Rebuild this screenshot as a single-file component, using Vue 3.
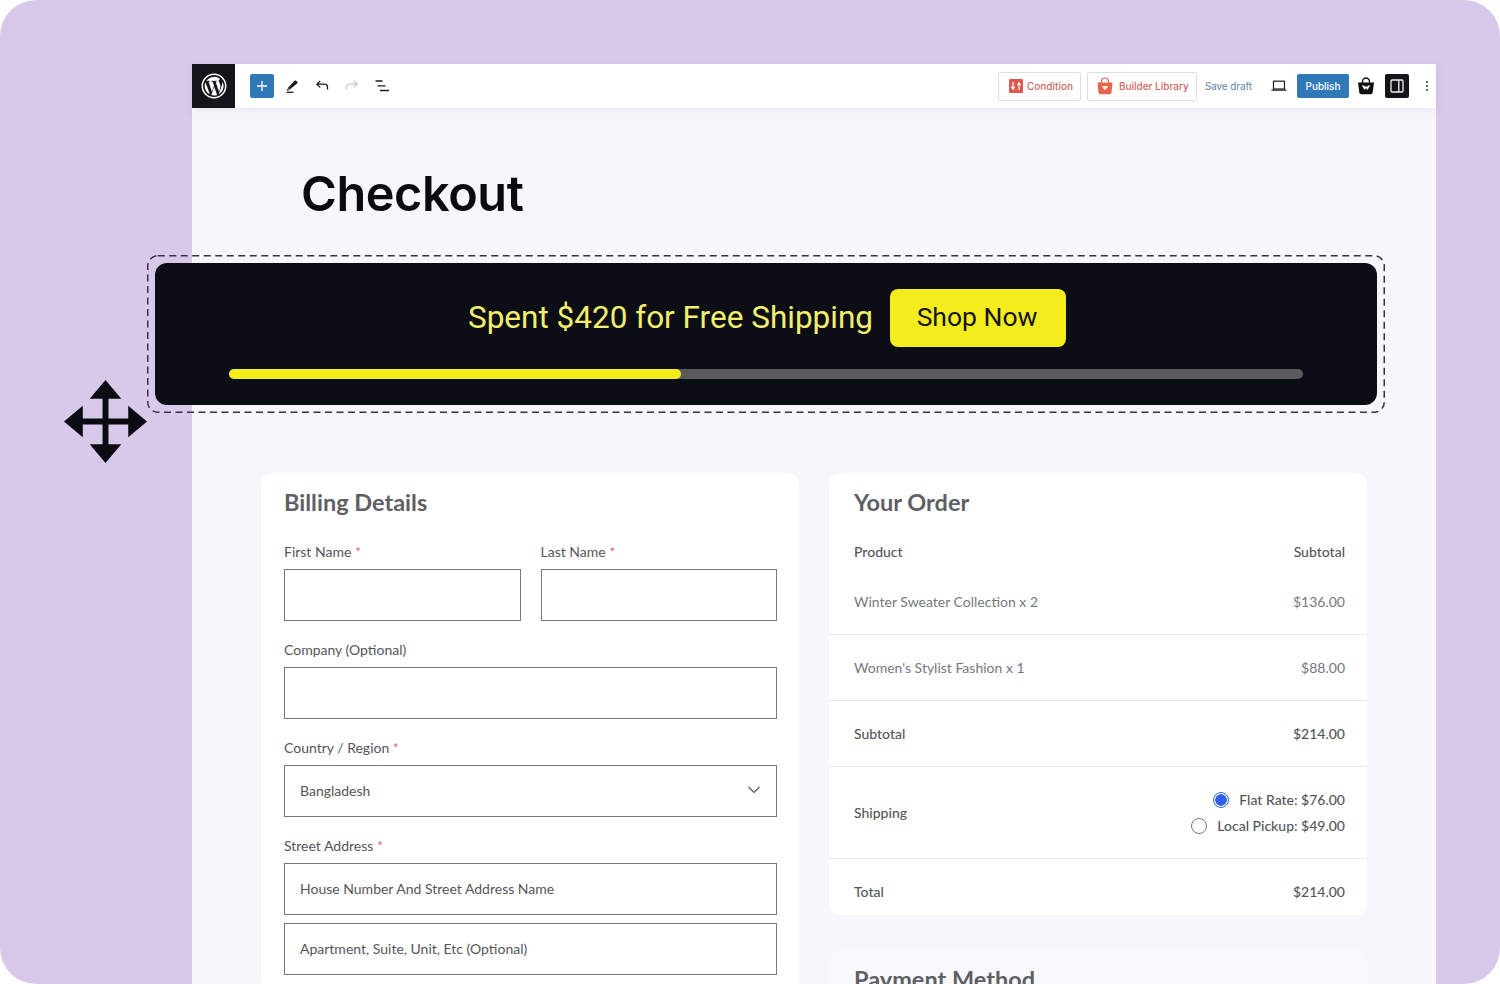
<script setup>
const rows = [
  { name: "Winter Sweater Collection x 2", price: "$136.00" },
  { name: "Women's Stylist Fashion x 1", price: "$88.00" },
];
</script>

<template>
  <main class="page">
    <section class="editor">
      <header class="topbar">
        <div class="wp-logo">
          <svg viewBox="0 0 24 24" width="26" height="26">
            <circle cx="12" cy="12" r="10.800" fill="none" stroke="#fff" stroke-width="1.400" />
            <path fill="#fff" d="M3.400 12c0 3.400 2 6.300 4.800 7.700L4.100 8.600C3.700 9.600 3.400 10.800 3.400 12zM17.800 11.600c0-1.100-.4-1.800-.7-2.400-.4-.7-.8-1.300-.8-2 0-.8.600-1.500 1.400-1.500h.1A8.600 8.600 0 0 0 5 7.300h.6c.9 0 2.300-.1 2.300-.1.500 0 .5.700.1.700 0 0-.5.100-1 .1l3.100 9.300 1.900-5.700-1.300-3.600c-.5 0-.9-.1-.9-.1-.5 0-.4-.7 0-.7 0 0 1.400.1 2.300.1.900 0 2.300-.1 2.300-.1.500 0 .5.700.1.700 0 0-.5.100-1 .1l3.100 9.200.9-2.900c.2-.8.300-1.300.3-2.100zM12.200 12.800l-2.600 7.500a8.600 8.600 0 0 0 5.300-.1l-.1-.1zM19.600 7.900c0 .3.100.6.100 1 0 .9-.2 1.900-.7 3.200l-2.600 7.600a8.600 8.600 0 0 0 3.200-11.800z" />
          </svg>
        </div>
        <div class="tools-left">
          <button class="add-btn">
            <svg viewBox="0 0 14 14" width="14" height="14"><path d="M7 2v10M2 7h10" stroke="#fff" stroke-width="1.300" /></svg>
          </button>
          <svg class="tool" viewBox="0 0 16 16" width="16" height="16">
            <path d="M5.500 11.800 3.800 10.100l6.700-7.300c.6-.6 1.400-.5 2 .1l.6.6c.6.6.6 1.400 0 2z" fill="#1e1e1e" />
            <path d="M3.500 10.500 2.800 12.800l2.500-.6z" fill="#1e1e1e" />
            <path d="M2.500 14.300h7" stroke="#1e1e1e" stroke-width="1.300" />
          </svg>
          <svg class="tool" viewBox="0 0 16 16" width="16" height="16" fill="none" stroke="#1e1e1e" stroke-width="1.300">
            <path d="M6.200 3 2.800 6.200l3.400 3.200M3 6.200h7.500a3 3 0 0 1 3 3v2.300" />
          </svg>
          <svg class="tool" viewBox="0 0 16 16" width="16" height="16" fill="none" stroke="#c9c9c9" stroke-width="1.300">
            <path d="M9.800 3l3.400 3.200-3.400 3.200M13 6.200H5.500a3 3 0 0 0-3 3v2.300" />
          </svg>
          <svg class="tool" viewBox="0 0 16 16" width="16" height="16" stroke="#1e1e1e" stroke-width="1.300">
            <path d="M1.500 3h7M3.500 7.800h8M6 12.500h9" />
          </svg>
        </div>
        <div class="tools-right">
          <a class="ext-btn cond">
            <svg viewBox="0 0 14 14" width="14" height="14">
              <rect width="14" height="14" rx="1" fill="#dd5a52" />
              <path d="M4 3v7M2.300 7.800 4 10.200l1.700-2.400M10 11V4M8.300 6.200 10 3.800l1.700 2.400" stroke="#fff" stroke-width="1.100" fill="none" />
            </svg>
            Condition
          </a>
          <a class="ext-btn lib">
            <svg viewBox="0 0 18 18" width="18" height="18">
              <path d="M5.500 6V4.500a3.500 3.500 0 0 1 7 0V6" fill="none" stroke="#e8644f" stroke-width="1.200" />
              <path d="M1.500 5.500h15l-1 10a2 2 0 0 1-2 1.800h-9a2 2 0 0 1-2-1.800z" fill="#e8644f" />
              <path d="M5.500 9h7L9 13.500z" fill="#fde9d8" />
            </svg>
            Builder Library
          </a>
          <span class="save">Save draft</span>
          <svg class="device" viewBox="0 0 16 12" width="16" height="12" fill="none" stroke="#1e1e1e" stroke-width="1.200">
            <rect x="2.500" y="1.200" width="11" height="7.800" />
            <path d="M.5 10.200h15" />
          </svg>
          <button class="publish">Publish</button>
          <svg class="basket" viewBox="0 0 18 18" width="18" height="18">
            <path d="M5.500 6V4.500a3.500 3.500 0 0 1 7 0V6" fill="none" stroke="#111" stroke-width="1.300" />
            <path d="M1 5.500h16l-1.300 10a2 2 0 0 1-2 1.800H4.300a2 2 0 0 1-2-1.800z" fill="#111" />
            <path d="M4.800 8.500h2.400L8 10.200 9 8.500l1 1.700.8-1.700h2.400L10.400 13 9 11 7.600 13z" fill="#fff" />
          </svg>
          <button class="panel-btn">
            <svg viewBox="0 0 14 14" width="14" height="14" fill="none" stroke="#f2f2f2" stroke-width="1.300">
              <rect x="1" y="1" width="12" height="12" rx="1" />
              <path d="M8.800 1v12" />
            </svg>
          </button>
          <span class="dots"><i></i><i></i><i></i></span>
        </div>
      </header>

      <h1 class="title">Checkout</h1>

      <div class="banner-outline">
        <svg class="dash" width="1238" height="158">
          <rect x="0.750" y="0.750" width="1236.500" height="156.500" rx="10" fill="none" stroke="#37304c" stroke-width="1.500" stroke-dasharray="7 4.500" />
        </svg>
        <div class="banner">
          <div class="banner-line">
            <span class="banner-text">Spent $420 for Free Shipping</span>
            <button class="shop-btn">Shop Now</button>
          </div>
          <div class="progress"><div class="progress-fill" :style="{ width: '42.1%' }"></div></div>
        </div>
      </div>

      <div class="columns">
        <section class="card billing">
          <h2>Billing Details</h2>
          <div class="two">
            <div class="field">
              <label>First Name <em>*</em></label>
              <div class="input"></div>
            </div>
            <div class="field">
              <label>Last Name <em>*</em></label>
              <div class="input"></div>
            </div>
          </div>
          <div class="field">
            <label>Company (Optional)</label>
            <div class="input"></div>
          </div>
          <div class="field">
            <label>Country / Region <em>*</em></label>
            <div class="input select">
              Bangladesh
              <svg viewBox="0 0 14 8" width="14" height="8" fill="none" stroke="#555" stroke-width="1.100"><path d="M1.500 1 7 6.500 12.500 1" /></svg>
            </div>
          </div>
          <div class="field tight">
            <label>Street Address <em>*</em></label>
            <div class="input">House Number And Street Address Name</div>
          </div>
          <div class="input">Apartment, Suite, Unit, Etc (Optional)</div>
        </section>

        <div class="right-col">
          <section class="card order">
            <h2>Your Order</h2>
            <div class="row row-head"><span>Product</span><span>Subtotal</span></div>
            <div v-for="r in rows" :key="r.name" class="row row-item">
              <span>{{ r.name }}</span><span>{{ r.price }}</span>
            </div>
            <div class="row row-sub"><span>Subtotal</span><span>$214.00</span></div>
            <div class="row row-ship">
              <span>Shipping</span>
              <div class="ship-opts">
                <div class="opt"><span class="radio on"></span>Flat Rate: $76.00</div>
                <div class="opt"><span class="radio"></span>Local Pickup: $49.00</div>
              </div>
            </div>
            <div class="row row-total"><span>Total</span><span>$214.00</span></div>
          </section>
          <section class="card payment">
            <h2>Payment Method</h2>
          </section>
        </div>
      </div>
    </section>

    <svg class="move-icon" viewBox="0 0 84 84" width="83" height="83">
      <path fill="#0b0b12" d="M42 0 58 19H45V39H65V26L84 42 65 58V45H45V65H58L42 84 26 65H39V45H19V58L0 42 19 26V39H39V19H26z" />
    </svg>
  </main>
</template>

<style>
html,
body {
  margin: 0;
  background: #fff;
}
</style>

<style scoped>
.page {
  position: relative;
  box-sizing: border-box;
  width: 1500px;
  height: 984px;
  padding: 64px 64px 0 192px;
  overflow: hidden;
  background: #d8c9ea;
  border-radius: 36px;
  font-family: Lato, "Liberation Sans", sans-serif;
}

.editor {
  height: 920px;
  background: #f8f6fd;
}

.topbar {
  display: flex;
  align-items: center;
  height: 44px;
  background: #fff;
  box-shadow: 0 3px 10px rgba(60, 50, 90, 0.08);
}

.wp-logo {
  display: flex;
  align-items: center;
  justify-content: center;
  width: 43px;
  height: 44px;
  background: #17151c;
}

.tools-left {
  display: flex;
  align-items: center;
  gap: 14px;
  margin-left: 15px;
}

.add-btn {
  display: flex;
  align-items: center;
  justify-content: center;
  width: 24px;
  height: 24px;
  margin-right: -4px;
  padding: 0;
  border: none;
  border-radius: 2px;
  background: #2f79b9;
}

.tools-right {
  display: flex;
  align-items: center;
  margin-left: auto;
  padding-right: 8px;
}

.ext-btn {
  display: flex;
  align-items: center;
  box-sizing: border-box;
  height: 29px;
  border: 1px solid #e2dddd;
  border-radius: 2px;
  color: #d2685f;
  font-family: Inter, sans-serif;
  font-size: 10px;
  font-weight: 500;
}

.cond {
  width: 83px;
  gap: 4px;
  padding-left: 10px;
}

.lib {
  width: 110px;
  gap: 5px;
  margin-left: 6px;
  padding-left: 8px;
}

.save {
  margin-left: 8px;
  color: #5d86a0;
  font-family: Inter, sans-serif;
  font-size: 9.800px;
}

.device {
  margin-left: 19px;
}

.publish {
  width: 52px;
  height: 24px;
  margin-left: 10px;
  padding: 0;
  border: none;
  border-radius: 2px;
  background: #2f79b9;
  color: #fff;
  font-family: Inter, sans-serif;
  font-size: 10px;
  font-weight: 500;
}

.basket {
  margin-left: 8px;
}

.panel-btn {
  display: flex;
  align-items: center;
  justify-content: center;
  width: 24px;
  height: 24px;
  margin-left: 10px;
  padding: 0;
  border: none;
  border-radius: 2px;
  background: #17151c;
}

.dots {
  display: flex;
  flex-direction: column;
  gap: 2px;
  margin-left: 17px;
}

.dots i {
  width: 2px;
  height: 2px;
  border-radius: 50%;
  background: #333;
}

.title {
  margin: 0;
  padding: 57px 0 0 109px;
  color: #0a0a10;
  font-family: Inter, sans-serif;
  font-size: 48.600px;
  font-weight: 600;
  line-height: 58px;
  letter-spacing: -0.4px;
}

.banner-outline {
  position: relative;
  box-sizing: border-box;
  width: 1238px;
  height: 158px;
  margin: 32px 0 0 -45px;
  padding: 8px;
}

.dash {
  position: absolute;
  left: 0;
  top: 0;
}

.banner {
  display: flex;
  flex-direction: column;
  align-items: center;
  height: 142px;
  background: #0b0e14;
  border-radius: 12px;
}

.banner-line {
  display: flex;
  align-items: center;
  gap: 17px;
  margin-top: 26px;
  margin-left: 2px;
}

.banner-text {
  padding-bottom: 2px;
  color: #f3ee6e;
  font-family: Roboto, sans-serif;
  font-size: 31.500px;
}

.shop-btn {
  width: 176px;
  height: 58px;
  padding: 0 2px 3px 0;
  border: none;
  border-radius: 8px;
  background: #f5ec1d;
  color: #14141a;
  font-family: Roboto, sans-serif;
  font-size: 26.500px;
}

.progress {
  width: 1074px;
  height: 10px;
  margin-top: 22px;
  border-radius: 5px;
  background: #5a5a5c;
}

.progress-fill {
  height: 100%;
  border-radius: 5px;
  background: #f5ec1d;
}

.columns {
  display: flex;
  align-items: flex-start;
  gap: 30px;
  margin: 60px 0 0 69px;
}

.card {
  box-sizing: border-box;
  width: 538px;
  background: #fff;
  border-radius: 12px;
  color: #55565b;
}

.card h2 {
  margin: 0;
  color: #5f6065;
  font-size: 23.500px;
  font-weight: 700;
  line-height: 30px;
}

.billing {
  height: 520px;
  padding: 14px 22px 15px 23px;
}

.billing h2 {
  margin-bottom: 26px;
}

.two {
  display: flex;
  gap: 20px;
}

.two .field {
  flex: 1;
}

.field {
  margin-bottom: 20px;
}

.field.tight {
  margin-bottom: 8px;
}

.field label {
  display: block;
  height: 18px;
  margin-bottom: 8px;
  font-size: 14px;
  line-height: 18px;
}

.field em {
  color: #e0687c;
  font-style: normal;
}

.input {
  display: flex;
  align-items: center;
  justify-content: space-between;
  box-sizing: border-box;
  height: 52px;
  padding: 0 15px 2px;
  border: 1px solid #77787c;
  font-size: 14px;
}

.right-col {
  display: flex;
  flex-direction: column;
  gap: 35px;
}

.order {
  height: 442px;
}

.order h2 {
  padding: 14px 25px 0;
}

.row {
  display: flex;
  align-items: center;
  justify-content: space-between;
  box-sizing: border-box;
  padding: 0 22px 0 25px;
  font-size: 14px;
}

.row-head {
  height: 52px;
  padding-top: 17px;
  font-weight: 500;
}

.row-item {
  height: 66px;
  border-bottom: 1px solid #e8e8ee;
  color: #77787d;
}

.row-sub {
  height: 66px;
  border-bottom: 1px solid #e8e8ee;
  font-weight: 500;
}

.row-ship {
  height: 92px;
  border-bottom: 1px solid #e8e8ee;
  font-weight: 500;
}

.row-total {
  height: 56px;
  padding-top: 8px;
  font-weight: 500;
}

.ship-opts {
  display: flex;
  flex-direction: column;
  align-items: flex-end;
  gap: 8px;
}

.opt {
  display: flex;
  align-items: center;
  gap: 10px;
  height: 18px;
}

.radio {
  box-sizing: border-box;
  width: 16px;
  height: 16px;
  border: 1px solid #77787c;
  border-radius: 50%;
  background: #fff;
}

.radio.on {
  border: 1px solid #2f62e6;
  background: radial-gradient(circle, #2f62e6 0 5.500px, #fff 6px);
}

.payment {
  height: 200px;
  padding-top: 14px;
  background: #f9f8fd;
}

.payment h2 {
  padding-left: 25px;
}

.move-icon {
  position: absolute;
  left: 64px;
  top: 380px;
}
</style>
